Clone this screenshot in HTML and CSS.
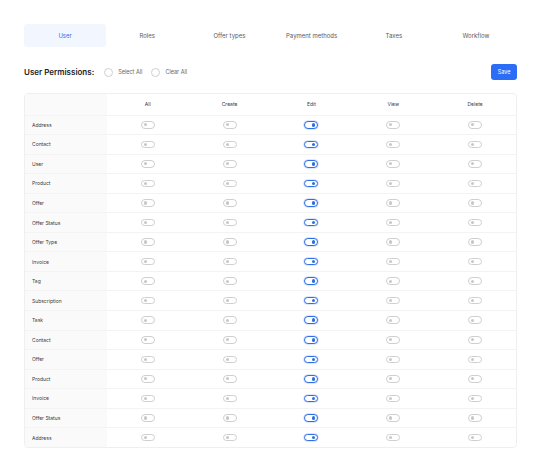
FILE: index.html
```html
<!DOCTYPE html>
<html>
<head>
<meta charset="utf-8">
<link rel="stylesheet" href="styles.css">
</head>
<body>
<div class="page">
  <nav class="tabs">
    <div class="tab active">User</div>
    <div class="tab">Roles</div>
    <div class="tab">Offer types</div>
    <div class="tab">Payment methods</div>
    <div class="tab">Taxes</div>
    <div class="tab">Workflow</div>
  </nav>
  <div class="toolbar">
    <div class="title">User Permissions:</div>
    <label class="radio"><span class="circle"></span>Select All</label>
    <label class="radio"><span class="circle"></span>Clear All</label>
    <button class="save">Save</button>
  </div>
  <div class="table" id="table">
    <div class="row head">
      <div class="cell label"></div>
      <div class="cell">All</div>
      <div class="cell">Create</div>
      <div class="cell">Edit</div>
      <div class="cell">View</div>
      <div class="cell">Delete</div>
    </div>
  </div>
</div>
<script>
  var names = ["Address","Contact","User","Product","Offer","Offer Status","Offer Type","Invoice","Tag","Subscription","Task","Contact","Offer","Product","Invoice","Offer Status","Address"];
  var t = document.getElementById("table");
  names.forEach(function(n){
    var r = document.createElement("div");
    r.className = "row";
    var h = '<div class="cell label">' + n + '</div>';
    for (var i = 0; i < 5; i++) {
      h += '<div class="cell"><span class="toggle' + (i === 2 ? ' on' : '') + '"></span></div>';
    }
    r.innerHTML = h;
    t.appendChild(r);
  });
</script>
</body>
</html>
```
FILE: styles.css
```css
* { box-sizing: border-box; }
html, body { margin: 0; padding: 0; background: #fff; }
body { font-family: Inter, "Noto Sans", sans-serif; color: #333; }
.page { padding: 24px 24px 0 24px; }

.tabs { display: flex; height: 23px; }
.tab {
  flex: 1;
  display: flex; align-items: center; justify-content: center;
  font-size: 6px; color: #5a5a5a; border-radius: 3px;
}
.tab.active { background: #f2f6ff; color: #2e6be6; }

.toolbar {
  display: flex; align-items: center;
  margin-top: 17px; height: 16px;
}
.title { font-size: 8px; font-weight: 600; color: #222; margin-right: 10px; }
.radio { display: flex; align-items: center; font-size: 5.5px; color: #666; margin-right: 9px; }
.circle {
  width: 9px; height: 9px; border-radius: 50%;
  border: 0.8px solid #cfcfcf; margin-right: 5px; background: #fff;
}
.save {
  margin-left: auto;
  width: 26px; height: 16px; border: none; border-radius: 3px;
  background: #2b6ef5; color: #fff; font-family: inherit; font-size: 5.5px; padding: 0;
}

.table {
  margin-top: 13px;
  border: 1px solid #efefef; border-radius: 4px; overflow: hidden;
}
.row {
  display: grid; grid-template-columns: repeat(6, 1fr);
  height: 19.56px; border-top: 1px solid #f3f3f3;
}
.row.head { height: 20.5px; border-top: none; }
.cell {
  display: flex; align-items: center; justify-content: center;
  font-size: 5px; color: #3a3a3a;
}
.cell.label { justify-content: flex-start; padding-left: 7px; background: #fafafa; }

.toggle {
  position: relative; display: block;
  width: 14px; height: 7.5px; border-radius: 4px;
  border: 0.8px solid #cfcfcf; background: #fff;
}
.toggle::after {
  content: ""; position: absolute; top: 50%; left: 2px;
  width: 3.2px; height: 3.2px; margin-top: -1.6px;
  border-radius: 50%; background: #c8c8c8;
}
.toggle.on { border: 1.2px solid #2f6fe3; box-shadow: 0 0 0 0.8px #d3e1fb; }
.toggle.on::after { left: auto; right: 2px; background: #2f6fe3; width: 3.5px; height: 3.5px; margin-top: -1.75px; }
```
